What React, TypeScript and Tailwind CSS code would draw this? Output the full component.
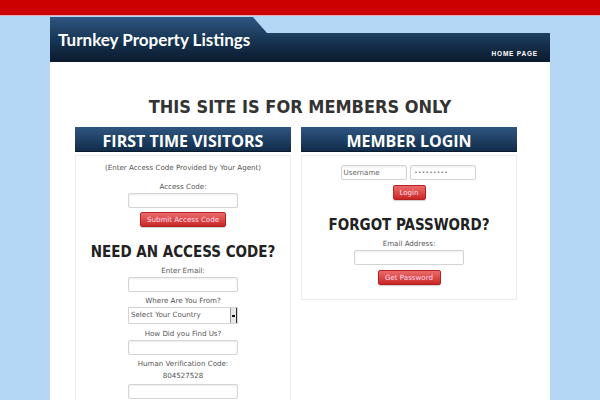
import React from "react";

const label = "block h-[10px] leading-[10px] text-[7.1px] text-[#555] text-center whitespace-nowrap";
const input =
  "block mx-auto w-[110px] h-[15px] bg-white border border-[#d4d4d4] rounded-[2px] shadow-[inset_0_1px_2px_rgba(0,0,0,0.08)]";
const btn =
  "block mx-auto w-fit h-[15px] px-[6px] whitespace-nowrap text-[7.1px] leading-[13px] text-[#fde] bg-gradient-to-b from-[#ec6a6a] to-[#c92424] border border-[#b62222] rounded-[2px] shadow-[0_1px_1px_rgba(0,0,0,0.2)]";
const dv = { fontFamily: '"DejaVu Sans", Verdana, sans-serif' };
const hd = { fontFamily: '"DejaVu Sans Condensed", "DejaVu Sans", sans-serif' };

export default function App() {
  return (
    <div className="w-[600px] h-[400px] overflow-hidden bg-[#b3d7f5]" style={dv}>
      <div className="h-[15px] bg-[#cc0000]" />
      <div className="h-[1px] bg-[#e7a9ab]" />
      <div className="h-[1px]" />
      <div className="w-[500px] mx-auto">
        {/* header */}
        <div className="relative h-[45px] bg-gradient-to-b from-[#2f5782] via-[#183655] to-[#0a1a2d] [clip-path:polygon(0_0,203px_0,217px_16px,100%_16px,100%_100%,0_100%)]">
          <div
            className="absolute left-[8px] top-[12px] text-[17px] leading-[22px] font-bold text-white"
            style={{ fontFamily: "Lato, sans-serif" }}
          >
            Turnkey Property Listings
          </div>
          <div
            className="absolute right-[12px] bottom-[4px] text-[6.5px] leading-[9px] font-bold text-white tracking-[0.8px]"
            style={{ fontFamily: '"Liberation Sans", Arial, sans-serif' }}
          >
            HOME PAGE
          </div>
        </div>
        {/* content */}
        <div className="bg-white h-[400px] pt-[33px]">
          <h1 className="text-center text-[18px] leading-[24px] font-bold text-[#333]" style={hd}>
            THIS SITE IS FOR MEMBERS ONLY
          </h1>
          <div className="flex gap-[10px] pl-[25px] mt-[8px]">
            {/* left column */}
            <div className="w-[216px]">
              <div className="h-[25px] pt-[3px] bg-gradient-to-b from-[#2f5782] to-[#112c4a] border-b border-[#0a1a2d] text-center text-white text-[16px] leading-[22px] font-bold" style={{ fontFamily: '"Open Sans", sans-serif' }}>
                FIRST TIME VISITORS
              </div>
              <div className="mt-[3px] border border-[#ececec] h-[260px]">
                <div className={label + " mt-[7px]"}>(Enter Access Code Provided by Your Agent)</div>
                <div className={label + " mt-[9px]"}>Access Code:</div>
                <div className={input + " mt-[1px]"} />
                <div className={btn + " mt-[4px]"}>Submit Access Code</div>
                <h2 className="mt-[15px] text-center text-[15px] leading-[20px] font-bold text-[#222] whitespace-nowrap" style={hd}>
                  NEED AN ACCESS CODE?
                </h2>
                <div className={label + " mt-[4px]"}>Enter Email:</div>
                <div className={input + " mt-[1px]"} />
                <div className={label + " mt-[4px]"}>Where Are You From?</div>
                <div className="mx-auto mt-[1px] w-[110px] h-[17px] bg-white border border-[#d4d4d4] flex items-center">
                  <span className="flex-1 pl-[2px] text-[7.1px] text-[#555] whitespace-nowrap">Select Your Country</span>
                  <span className="w-[7px] h-[15px] bg-[#e8e8e8] border-l border-[#999] border-r border-r-[#333] flex items-center justify-center">
                    <span className="block w-[3px] h-[2px] bg-[#111]" />
                  </span>
                </div>
                <div className={label + " mt-[5px]"}>How Did you Find Us?</div>
                <div className={input + " mt-[1px]"} />
                <div className={label + " mt-[4px]"}>Human Verification Code:</div>
                <div className={label + " mt-[2px]"}>804527528</div>
                <div className={input + " mt-[3px]"} />
              </div>
            </div>
            {/* right column */}
            <div className="w-[216px]">
              <div className="h-[25px] pt-[3px] bg-gradient-to-b from-[#2f5782] to-[#112c4a] border-b border-[#0a1a2d] text-center text-white text-[16px] leading-[22px] font-bold" style={{ fontFamily: '"Open Sans", sans-serif' }}>
                MEMBER LOGIN
              </div>
              <div className="mt-[3px] border border-[#ececec] h-[145px]">
                <div className="flex justify-center gap-[3px] mt-[9px] pr-[2px]">
                  <div className="w-[66px] h-[15px] border border-[#d4d4d4] rounded-[2px] text-[7.1px] leading-[13px] text-[#666] pl-[2px] shadow-[inset_0_1px_2px_rgba(0,0,0,0.08)]">
                    Username
                  </div>
                  <div className="w-[66px] h-[15px] border border-[#d4d4d4] rounded-[2px] text-[5px] leading-[13px] text-[#444] pl-[4px] tracking-[0.8px] shadow-[inset_0_1px_2px_rgba(0,0,0,0.08)]">
                    •••••••••
                  </div>
                </div>
                <div className={btn + " mt-[5px] !w-[33px] h-[14px] leading-[12px] text-center !px-0"}>Login</div>
                <h2 className="mt-[15px] text-center text-[15px] leading-[20px] font-bold text-[#222]" style={hd}>
                  FORGOT PASSWORD?
                </h2>
                <div className={label + " mt-[4px]"}>Email Address:</div>
                <div className={input + " mt-[1px] h-[14px]"} />
                <div className={btn + " mt-[5px] !w-[63px] text-center !px-0"}>Get Password</div>
              </div>
            </div>
          </div>
        </div>
      </div>
    </div>
  );
}
